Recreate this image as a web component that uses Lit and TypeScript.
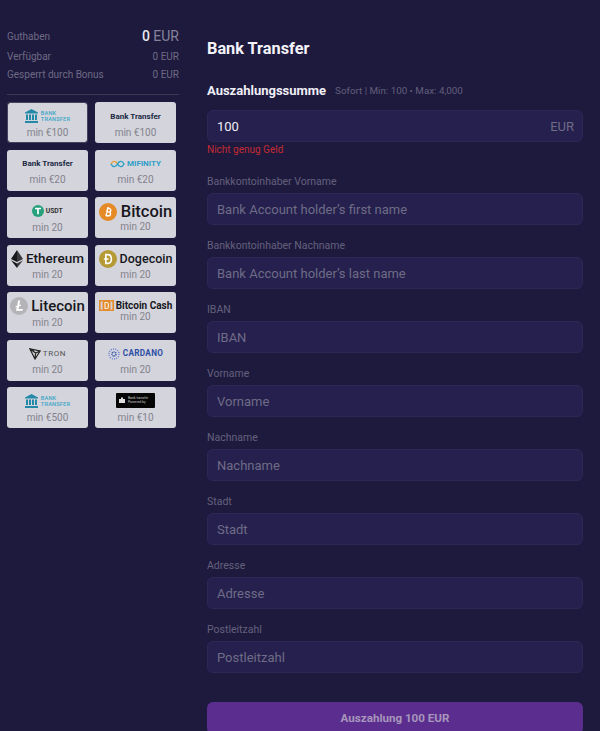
import { LitElement, css, html, svg } from 'lit'
import { customElement } from 'lit/decorators.js'

const bank = (c: string) => html`<svg class="ic" width="13" height="14" viewBox="0 0 13 14">
  <path fill=${c} d="M6.5 0 L13 3.4 V4.6 H0 V3.4 Z M0 12 H13 V14 H0 Z M1 5.5 H3 V11 H1 Z M4 5.5 H6 V11 H4 Z M7 5.5 H9 V11 H7 Z M10 5.5 H12 V11 H10 Z"/></svg>`

const coin = (size: number, bg: string, glyph: unknown) => html`<svg class="ic" width=${size} height=${size} viewBox="0 0 20 20">
  <circle cx="10" cy="10" r="10" fill=${bg}/>${glyph}</svg>`

const bankLogo = html`<span class="logo">${bank('#2488a8')}<span class="bank-t">BANK<br />TRANSFER</span></span>`

const cards = [
  { logo: bankLogo, min: 'min €100', cls: 'selected' },
  { logo: html`<span class="logo"><b class="bt">Bank Transfer</b></span>`, min: 'min €100' },
  { logo: html`<span class="logo"><b class="bt">Bank Transfer</b></span>`, min: 'min €20' },
  {
    logo: html`<span class="logo mif"><svg class="ic" width="15" height="8" viewBox="0 0 15 8"><path d="M1 4 C3 0 6 1 7.5 4" fill="none" stroke="#e8a33a" stroke-width="1.4"/><path d="M1 4 C3 8 6 7 7.5 4 C9 1 12 0 14 4 C12 8 9 7 7.5 4" fill="none" stroke="#2a9fc4" stroke-width="1.4"/></svg><b>MIFINITY</b></span>`,
    min: 'min €20',
  },
  {
    logo: html`<span class="logo usdt">${coin(12, '#26a17b', svg`<path fill="#fff" d="M5 4.5 H15 V7 H11.4 V15.5 H8.6 V7 H5 Z"/>`)}<b>USDT</b></span>`,
    min: 'min 20',
  },
  {
    logo: html`<span class="logo big">${coin(18, '#e58a27', svg`<path transform="rotate(12 10 10) translate(1.8 1.8) scale(.82)" fill="none" stroke="#fff" stroke-width="1.9" d="M7.5 5 H11.2 C14 5 14 9.6 11.2 9.6 H7.5 M11.2 9.6 C14.8 9.6 14.8 15 11.2 15 H7.5 M8.6 5 V15 M9.4 3.4 V5 M9.4 15 V16.6"/>`)}<span>Bitcoin</span></span>`,
    min: 'min 20',
    cls: 'tight',
  },
  {
    logo: html`<span class="logo mid"><svg class="ic" width="12" height="18" viewBox="0 0 12 18"><path fill="#3a3a3e" d="M6 0 L12 9 L6 12 Z"/><path fill="#18181a" d="M6 0 L0 9 L6 12 Z"/><path fill="#3a3a3e" d="M6 13.4 L12 10.2 L6 18 Z"/><path fill="#18181a" d="M6 13.4 L0 10.2 L6 18 Z"/></svg><span>Ethereum</span></span>`,
    min: 'min 20',
  },
  {
    logo: html`<span class="logo doge">${coin(18, '#b59a35', svg`<path fill="none" stroke="#fff" stroke-width="1.8" d="M7.6 5.2 H10 C15 5.2 15 14.8 10 14.8 H7.6 Z M5.4 10 H10.5"/>`)}<span>Dogecoin</span></span>`,
    min: 'min 20',
  },
  {
    logo: html`<span class="logo big lite">${coin(18, '#b4b4b8', svg`<path fill="#fff" d="M9 4 H11.4 L10.3 9 L12.4 8.2 L12 9.7 L10 10.5 L9.4 13.2 H14.4 L13.9 15.4 H6.6 L7.6 11.2 L6 11.8 L6.4 10.3 L8 9.7 Z"/>`)}<span>Litecoin</span></span>`,
    min: 'min 20',
  },
  {
    logo: html`<span class="logo bch"><svg class="ic" width="15" height="11" viewBox="0 0 15 11"><path fill="none" stroke="#e58a27" stroke-width="1.6" d="M3.5 .8 H.8 V10.2 H3.5 M11.5 .8 H14.2 V10.2 H11.5"/><rect x="3.5" y="0" width="8" height="11" fill="#e58a27"/><path fill="none" stroke="#f3e9dc" stroke-width="1.2" d="M6 2.5 H8 C10 2.5 10 8.5 8 8.5 H6 Z"/></svg><b>Bitcoin Cash</b></span>`,
    min: 'min 20',
    cls: 'stacked',
  },
  {
    logo: html`<span class="logo tron"><svg class="ic" width="12" height="12" viewBox="0 0 12 12"><path fill="none" stroke="#222" stroke-width="1.2" d="M.8 .8 L11.2 3 L6 11 Z M.8 .8 L6.6 5 L11.2 3 M6.6 5 L6 11"/></svg><span>TRON</span></span>`,
    min: 'min 20',
  },
  {
    logo: html`<span class="logo card"><svg class="ic" width="12" height="12" viewBox="0 0 12 12"><circle cx="6" cy="6" r="5" fill="none" stroke="#5c7fd0" stroke-width="1.4" stroke-dasharray="1 1.2"/><circle cx="6" cy="6" r="2" fill="none" stroke="#2a4fa8" stroke-width="1.4" stroke-dasharray="1 .6"/></svg><b>CARDANO</b></span>`,
    min: 'min 20',
  },
  { logo: bankLogo, min: 'min €500' },
  {
    logo: html`<span class="black"><svg width="6" height="6" viewBox="0 0 6 6"><path fill="#ddd" d="M0 2 H6 V6 H0 Z M2 .4 H4 V2 H2 Z"/></svg><span>Bank transfer<br />Powered by</span></span>`,
    min: 'min €10',
  },
]

const fields = [
  ['Bankkontoinhaber Vorname', 'Bank Account holder’s first name'],
  ['Bankkontoinhaber Nachname', 'Bank Account holder’s last name'],
  ['IBAN', 'IBAN'],
  ['Vorname', 'Vorname'],
  ['Nachname', 'Nachname'],
  ['Stadt', 'Stadt'],
  ['Adresse', 'Adresse'],
  ['Postleitzahl', 'Postleitzahl'],
]

@customElement('app-root')
export class AppRoot extends LitElement {
  static styles = css`
    :host {
      display: flex;
      width: 600px;
      height: 731px;
      overflow: hidden;
      background: #1e1a3e;
      font-family: Roboto, sans-serif;
      color: #6e6a84;
    }
    aside {
      width: 172px;
      margin-left: 7px;
      padding-top: 27px;
      flex: none;
    }
    .row {
      display: flex;
      justify-content: space-between;
      align-items: center;
      height: 18.5px;
      font-size: 10px;
    }
    .row.first {
      height: 18px;
      margin-bottom: 2px;
    }
    .row.first .amt {
      font-size: 14px;
      color: #85829a;
    }
    .row.first .amt b {
      color: #e8e6f0;
      font-weight: 500;
    }
    hr {
      border: 0;
      height: 1px;
      background: #3b3852;
      margin: 10px 0 7px;
    }
    .grid {
      display: grid;
      grid-template-columns: 81px 81px;
      grid-auto-rows: 41px;
      column-gap: 7px;
      row-gap: 6.5px;
    }
    .pay {
      background: #d4d4dc;
      border-radius: 3px;
      display: flex;
      flex-direction: column;
      align-items: center;
      justify-content: center;
      gap: 1px;
      padding-top: 1px;
      color: #83838d;
      font-size: 10px;
      line-height: 13px;
      box-sizing: border-box;
    }
    .pay.selected {
      border: 1.5px solid #1e1a3e;
      outline: 1px solid #45415e;
      outline-offset: -1px;
    }
    .pay.tight {
      gap: 0;
    }
    .pay.stacked {
      justify-content: flex-start;
      padding-top: 5px;
      gap: 0;
    }
    .pay.stacked .logo {
      margin-bottom: -4px;
    }
    .logo {
      display: flex;
      align-items: center;
      gap: 3px;
      height: 17px;
      color: #17171c;
      white-space: nowrap;
    }
    .ic {
      flex: none;
    }
    .bank-t {
      font-size: 5.6px;
      line-height: 6px;
      color: #3aa6c6;
      letter-spacing: 0.2px;
      font-weight: 500;
    }
    .bt {
      font-size: 8px;
      color: #1b2a44;
      font-weight: 700;
    }
    .mif {
      font-size: 8px;
      color: #2f9fc8;
      gap: 2px;
    }
    .usdt {
      font-size: 6.8px;
      color: #333;
      gap: 1.5px;
    }
    .big {
      font-size: 16.5px;
      gap: 4px;
      font-weight: 500;
    }
    .lite {
      font-size: 15px;
      gap: 3px;
    }
    .mid {
      font-size: 13.5px;
      gap: 3px;
      font-weight: 500;
    }
    .doge {
      font-size: 12.5px;
      gap: 3px;
      font-weight: 500;
    }
    .bch {
      font-size: 10px;
      gap: 2px;
    }
    .tron {
      font-size: 8px;
      letter-spacing: 0.6px;
      color: #555;
      gap: 2px;
    }
    .card {
      font-size: 8.2px;
      color: #2d4fa5;
      letter-spacing: 0.3px;
      gap: 3px;
    }
    .black {
      display: flex;
      align-items: center;
      gap: 3px;
      width: 39px;
      height: 15px;
      padding-left: 3px;
      box-sizing: border-box;
      margin-bottom: 2px;
      background: #050505;
      border-radius: 1px;
      color: #c9c9c9;
      font-size: 3.4px;
      line-height: 4.2px;
      white-space: nowrap;
    }
    main {
      width: 376px;
      margin-left: 28px;
      flex: none;
      padding-top: 39px;
    }
    h1 {
      margin: 0;
      font-size: 16.3px;
      line-height: 19px;
      font-weight: 700;
      color: #f4f3f8;
    }
    .sum {
      display: flex;
      align-items: center;
      gap: 9px;
      margin-top: 23px;
      height: 18px;
    }
    .sum b {
      font-size: 13px;
      color: #f0eff6;
    }
    .sum span {
      font-size: 9.8px;
      color: #625f7b;
    }
    .input {
      display: flex;
      align-items: center;
      justify-content: space-between;
      height: 32px;
      padding: 0 8px 0 9px;
      box-sizing: border-box;
      background: #25204d;
      border: 1px solid #2c2757;
      border-radius: 6px;
      font-size: 13px;
      color: #6f6c87;
    }
    .amount {
      margin-top: 11px;
    }
    .amount .val {
      color: #eeedf5;
    }
    .err {
      margin-top: 1px;
      font-size: 10px;
      line-height: 14px;
      color: #c42a33;
    }
    .field {
      margin-top: 15px;
    }
    .err + .field {
      margin-top: 19px;
    }
    .field label {
      display: block;
      font-size: 10.5px;
      line-height: 12px;
      margin-bottom: 5px;
      color: #64617c;
    }
    button {
      display: block;
      width: 100%;
      height: 32px;
      margin-top: 29px;
      border: 0;
      border-radius: 6px;
      background: #5b2d8e;
      color: #a796bc;
      font: 700 11.6px Roboto, sans-serif;
    }
  `

  render() {
    return html`
      <aside>
        <div class="row first"><span>Guthaben</span><span class="amt"><b>0</b> EUR</span></div>
        <div class="row"><span>Verfügbar</span><span>0 EUR</span></div>
        <div class="row"><span>Gesperrt durch Bonus</span><span>0 EUR</span></div>
        <hr />
        <div class="grid">
          ${cards.map((c) => html`<div class="pay ${c.cls ?? ''}">${c.logo}<span>${c.min}</span></div>`)}
        </div>
      </aside>
      <main>
        <h1>Bank Transfer</h1>
        <div class="sum"><b>Auszahlungssumme</b><span>Sofort | Min: 100 • Max: 4,000</span></div>
        <div class="input amount"><span class="val">100</span><span>EUR</span></div>
        <div class="err">Nicht genug Geld</div>
        ${fields.map(
          ([label, hint]) => html`<div class="field">
            <label>${label}</label>
            <div class="input">${hint}</div>
          </div>`
        )}
        <button>Auszahlung 100 EUR</button>
      </main>
    `
  }
}
